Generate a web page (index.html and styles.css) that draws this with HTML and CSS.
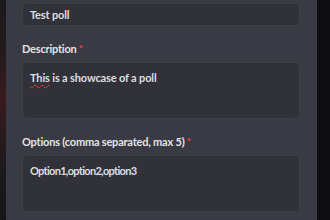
FILE: index.html
```html
<!DOCTYPE html>
<html lang="en">
<head>
    <meta charset="UTF-8">
    <title>Create poll</title>
    <link rel="stylesheet" href="styles.css">
</head>
<body>
    <div class="backdrop-left"></div>

    <div class="modal">
        <div class="field first">
            <div class="input">Test poll</div>
        </div>

        <div class="field">
            <div class="label">Description <span class="req">*</span></div>
            <div class="textarea"><span class="typo">This</span> is a showcase of a poll</div>
        </div>

        <div class="field">
            <div class="label">Options (comma separated, max 5) <span class="req">*</span></div>
            <div class="textarea options-list">Option1,option2,option3</div>
        </div>
    </div>

    <div class="backdrop-right"></div>
</body>
</html>
```

FILE: styles.css
```css
body {
    margin: 0;
    width: 330px;
    height: 220px;
    overflow: hidden;
    display: flex;
    background-color: #0e0e10;
    font-family: Lato, "Noto Sans", sans-serif;
}
.backdrop-left {
    width: 6px;
    background: linear-gradient(to bottom, #1c1a1b 0%, #241a1c 25%, #3a1a1e 45%, #2a1a1c 60%, #1a1a1d 80%, #161618 100%);
}
.modal {
    width: 311px;
    background-color: #393a43;
    padding: 0 17px 0 16px;
    box-sizing: border-box;
}
.field {
    margin-top: 16px;
}
.field.first {
    margin-top: 3px;
}
.input {
    height: 23px;
    box-sizing: border-box;
    background-color: #313239;
    border: 1px solid #3d3e47;
    border-radius: 5px;
    padding: 0 7px;
    color: #dcdde1;
    font-size: 11px;
    font-weight: 700;
    letter-spacing: -0.15px;
    line-height: 21px;
}
.label {
    color: #e3e4e8;
    font-size: 11px;
    font-weight: 700;
    letter-spacing: -0.2px;
    line-height: 14px;
    margin-bottom: 6px;
}
.req {
    color: #f0474b;
    font-size: 9px;
    vertical-align: top;
}
.textarea {
    height: 57px;
    box-sizing: border-box;
    background-color: #313239;
    border: 1px solid #3d3e47;
    border-radius: 5px;
    padding: 8px 7px;
    color: #dcdde1;
    font-size: 11px;
    font-weight: 700;
    letter-spacing: -0.15px;
    line-height: 14px;
}
.options-list {
    letter-spacing: -0.7px;
}
.typo {
    text-decoration: underline wavy #e0383d;
    text-decoration-thickness: 1px;
    text-underline-offset: 2px;
}
```
